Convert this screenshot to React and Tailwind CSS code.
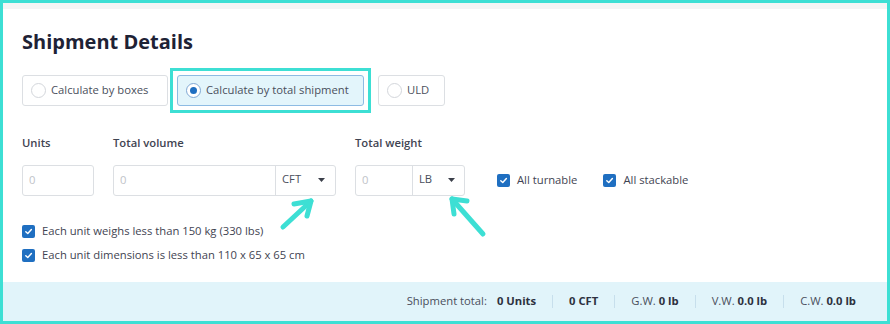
import React from "react";

function Radio({ checked }) {
  return (
    <span
      className={`w-[15px] h-[15px] rounded-full border flex items-center justify-center bg-white shrink-0 ${
        checked ? "border-[#7fa8d4]" : "border-[#d3d6db]"
      }`}
    >
      {checked && <span className="w-[7px] h-[7px] rounded-full bg-[#1f6fc1]" />}
    </span>
  );
}

function Check({ label, className = "" }) {
  return (
    <div className={`flex items-center gap-[7px] ${className}`}>
      <span className="w-[13px] h-[13px] rounded-[2px] bg-[#1f6fc1] flex items-center justify-center shrink-0">
        <svg width="9" height="9" viewBox="0 0 10 10" fill="none">
          <path d="M2 5.2 L4.2 7.3 L8.2 2.8" stroke="white" strokeWidth="1.6" strokeLinecap="round" strokeLinejoin="round" />
        </svg>
      </span>
      <span>{label}</span>
    </div>
  );
}

function Caret() {
  return (
    <svg width="7" height="4" viewBox="0 0 7 4">
      <path d="M0 0 L7 0 L3.5 4 Z" fill="#3b3f4a" />
    </svg>
  );
}

function Divider() {
  return <span className="w-px h-[13px] bg-[#c7dfec] mx-[16px]" />;
}

export default function App() {
  return (
    <div
      className="relative w-[890px] h-[324px] border-[3px] border-[#3ddfd4] bg-white flex flex-col text-[#4a4f5c]"
      style={{ fontFamily: '"Open Sans", "Liberation Sans", sans-serif' }}
    >
      <div className="h-[6px] bg-[#f4f5f5]" />

      <div className="flex-1 px-[19px] pt-[19px]">
        <h2 className="text-[20px] leading-[28px] font-bold text-[#1e2235]">Shipment Details</h2>

        {/* Method selector */}
        <div className="flex items-center mt-[12px] text-[11.25px]">
          <div className="w-[146px] h-[31px] border border-[#dcdfe3] rounded-[3px] flex items-center pl-[8px] gap-[5px]">
            <Radio />
            <span>Calculate by boxes</span>
          </div>
          <div className="ml-[2px] border-[3px] border-[#3ddfd4] p-[4px]">
            <div className="w-[187px] h-[31px] border border-[#8dbbe3] bg-[#e3f5fb] rounded-[3px] flex items-center pl-[8px] gap-[5px]">
              <Radio checked />
              <span>Calculate by total shipment</span>
            </div>
          </div>
          <div className="ml-[7px] w-[67px] h-[31px] border border-[#dcdfe3] rounded-[3px] flex items-center pl-[8px] gap-[5px]">
            <Radio />
            <span>ULD</span>
          </div>
        </div>

        {/* Inputs */}
        <div className="flex mt-[21px] text-[11.25px]">
          <div className="w-[72px] mr-[19px]">
            <div className="leading-[18px] font-semibold text-[#3f4452]">Units</div>
            <div className="mt-[13px] h-[31px] border border-[#dcdfe3] rounded-[3px] flex items-center px-[6px] text-[#c0c3c8]">0</div>
          </div>
          <div className="w-[223px] mr-[19px]">
            <div className="leading-[18px] font-semibold text-[#3f4452]">Total volume</div>
            <div className="mt-[13px] h-[31px] border border-[#dcdfe3] rounded-[3px] flex">
              <div className="flex-1 flex items-center px-[6px] text-[#c0c3c8]">0</div>
              <div className="w-[60px] border-l border-[#dcdfe3] flex items-center justify-between pl-[6px] pr-[10px] pb-[2px]">
                <span>CFT</span>
                <Caret />
              </div>
            </div>
          </div>
          <div className="w-[110px]">
            <div className="leading-[18px] font-semibold text-[#3f4452]">Total weight</div>
            <div className="mt-[13px] h-[31px] border border-[#dcdfe3] rounded-[3px] flex">
              <div className="flex-1 flex items-center px-[6px] text-[#c0c3c8]">0</div>
              <div className="w-[52px] border-l border-[#dcdfe3] flex items-center justify-between pl-[6px] pr-[9px] pb-[2px]">
                <span>LB</span>
                <Caret />
              </div>
            </div>
          </div>
          <div className="flex items-end ml-[32px]">
            <div className="h-[31px] flex items-center gap-[26px] text-[#3f4452]">
              <Check label="All turnable" />
              <Check label="All stackable" />
            </div>
          </div>
        </div>

        <div className="mt-[23px] text-[11.25px] text-[#3f4452]">
          <Check label="Each unit weighs less than 150 kg (330 lbs)" className="h-[24px]" />
          <Check label="Each unit dimensions is less than 110 x 65 x 65 cm" className="h-[24px]" />
        </div>
      </div>

      {/* Footer totals */}
      <div className="h-[39px] bg-[#e1f4fa] flex items-center justify-end pr-[31px] text-[11.25px] text-[#4a4f5c]">
        <span>Shipment total:</span>
        <span className="ml-[10px] font-bold text-[#2d3140]">0 Units</span>
        <Divider />
        <span className="font-bold text-[#2d3140]">0 CFT</span>
        <Divider />
        <span>G.W. <b className="text-[#2d3140]">0 lb</b></span>
        <Divider />
        <span>V.W. <b className="text-[#2d3140]">0.0 lb</b></span>
        <Divider />
        <span>C.W. <b className="text-[#2d3140]">0.0 lb</b></span>
      </div>

      {/* Annotation arrows */}
      <svg className="absolute left-[-3px] top-[-3px] pointer-events-none" width="890" height="324" viewBox="0 0 890 324" fill="none">
        <g stroke="#3ddfd4" strokeWidth="5" strokeLinecap="round" strokeLinejoin="round">
          <path d="M283 227 L311 201" />
          <path d="M294 204 L311 201 L307 216" />
          <path d="M483 234 L452 199" />
          <path d="M454 214 L452 199 L467 201" />
        </g>
      </svg>
    </div>
  );
}
